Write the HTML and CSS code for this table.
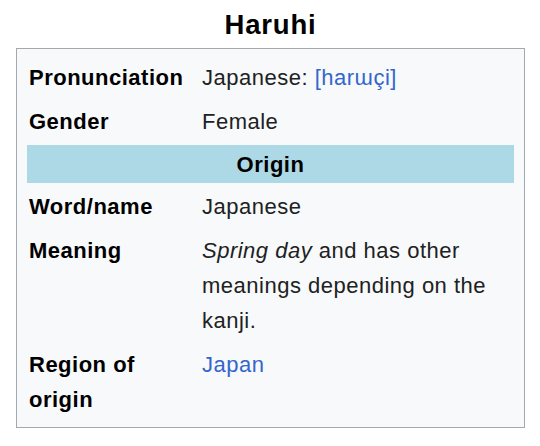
FILE: index.html
```html
<!DOCTYPE html>
<html lang="en">
<head>
<meta charset="utf-8">
<title>Haruhi</title>
<link rel="stylesheet" href="styles.css">
</head>
<body>
<div class="wrap">
  <div class="title">Haruhi</div>
  <div class="infobox">
    <div class="label">Pronunciation</div>
    <div class="value">Japanese: <a class="link" href="#">[harɯçi]</a></div>
    <div class="label">Gender</div>
    <div class="value">Female</div>
    <div class="header">Origin</div>
    <div class="label">Word/name</div>
    <div class="value">Japanese</div>
    <div class="label">Meaning</div>
    <div class="value"><i>Spring day</i> and has other meanings depending on the kanji.</div>
    <div class="label">Region of origin</div>
    <div class="value"><a class="link" href="#">Japan</a></div>
  </div>
</div>
</body>
</html>
```
FILE: styles.css
```css
html, body {
  margin: 0;
  padding: 0;
  background: #ffffff;
}
body {
  font-family: "Liberation Sans", Arial, "DejaVu Sans", sans-serif;
  font-size: 22px;
  letter-spacing: 0.5px;
  color: #202122;
}
.wrap {
  margin-left: 16px;
  width: 509px;
}
.title {
  text-align: center;
  font-weight: bold;
  font-size: 27.5px;
  letter-spacing: 0.8px;
  line-height: 47px;
  padding-top: 1px;
  color: #000000;
}
.infobox {
  box-sizing: border-box;
  width: 509px;
  border: 1px solid #a2a9b1;
  background: #f8f9fa;
  padding: 8px 10px 7px 10px;
  display: grid;
  grid-template-columns: 171px 1fr;
  column-gap: 3px;
  row-gap: 3px;
  line-height: 35px;
}
.label {
  font-weight: bold;
  padding: 3px 3px 3px 2px;
  color: #000000;
}
.value {
  padding: 3px 2px 3px 1px;
}
.header {
  grid-column: 1 / -1;
  background: #add8e6;
  text-align: center;
  font-weight: bold;
  padding: 1.5px 0;
  color: #000000;
}
.link {
  color: #3366cc;
  text-decoration: none;
}
```
